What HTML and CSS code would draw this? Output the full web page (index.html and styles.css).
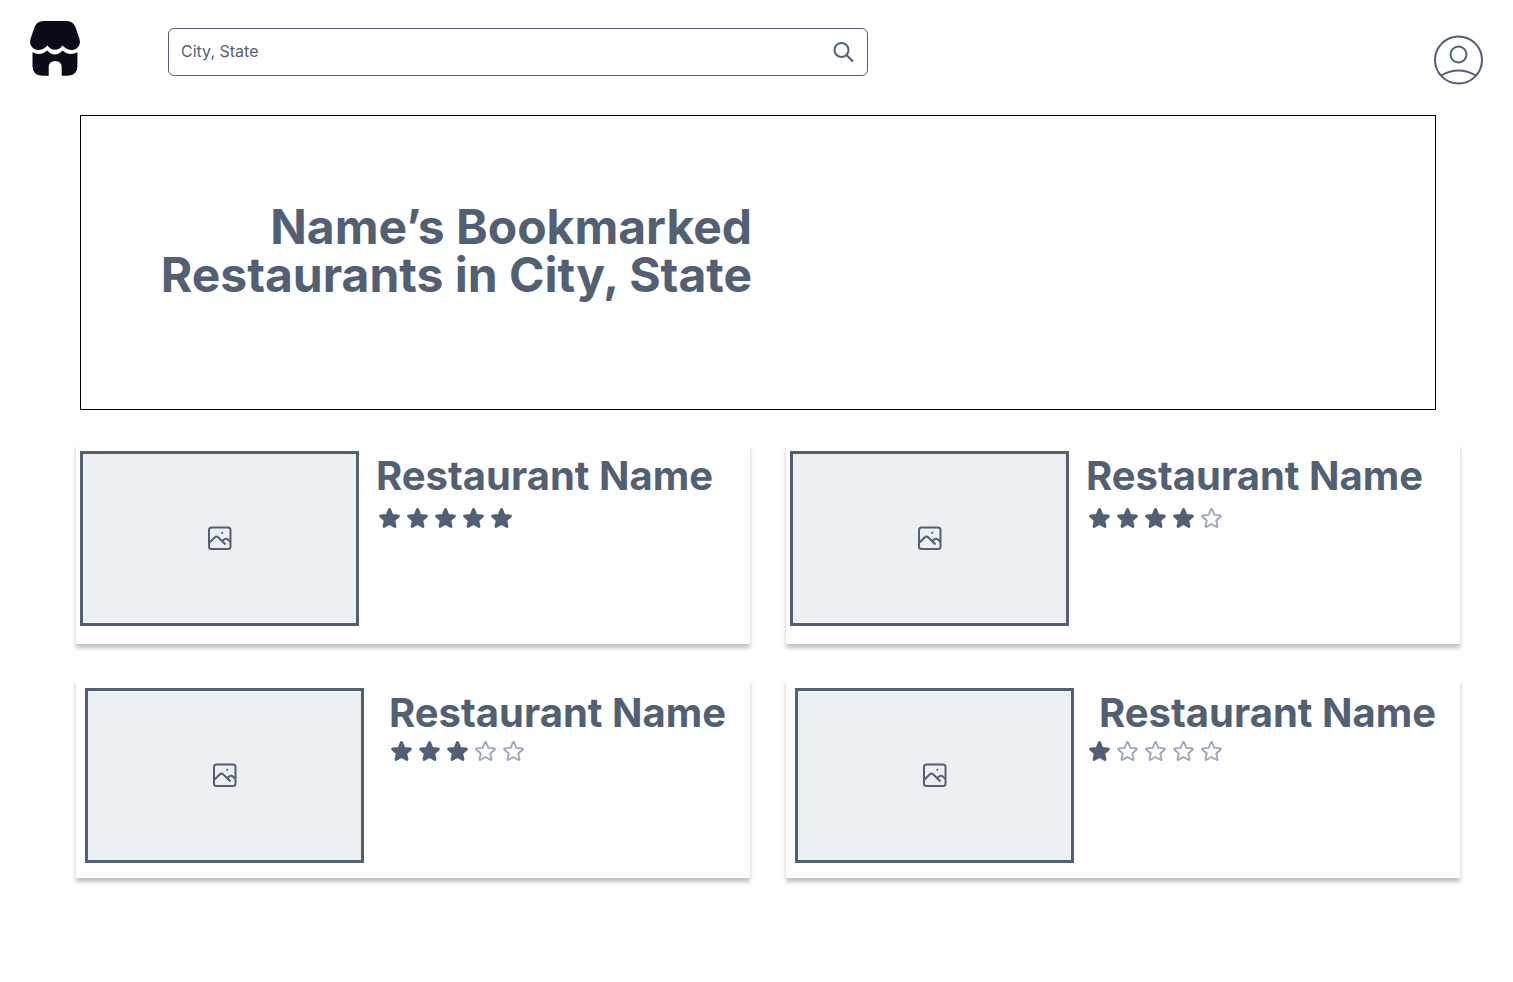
FILE: index.html
```html
<!DOCTYPE html>
<html lang="en">
<head>
<meta charset="utf-8">
<meta name="viewport" content="width=device-width, initial-scale=1">
<title>Bookmarked Restaurants</title>
<link rel="stylesheet" href="styles.css">
</head>
<body>
<svg class="sprite" aria-hidden="true">
  <symbol id="star" viewBox="0 0 24 24">
    <path d="M11.800 3.500q.7-1.200 1.400 0l2.100 5.300 5.700.5q1.700.3.5 1.500l-4.300 3.700 1.300 5.500q.1 1.400-1.200.8L12.500 18l-4.800 2.800q-1.300.6-1.200-.8l1.300-5.500-4.300-3.700q-1.200-1.200.5-1.500l5.700-.5z" stroke-width="1.800" stroke-linejoin="round"/>
  </symbol>
  <symbol id="picture" viewBox="0 0 24 24">
    <g fill="none" stroke="currentColor" stroke-width="2">
      <rect x="1" y="0.500" width="21.500" height="21.500" rx="2.500"/>
      <path d="M1.500 15.500l5.400-5.200q1.600-1.500 3.200 0l7.400 7.200M14 14.300l2.100-1.800q2-1.500 3.800 0l2.400 2.200"/>
    </g>
    <circle cx="14.200" cy="5.800" r="1.100" fill="currentColor"/>
  </symbol>
</svg>
<header class="topbar">
  <a class="logo" href="#" aria-label="Home">
    <svg viewBox="0 0 50 55" fill="#0b0b17">
      <path d="M13.500 0h23q6.500 0 9 6l3.800 11.500q2 6.500-2.700 10-6.600 4.300-14.100-3-3.300 4.300-7.500 4.300t-7.500-4.300q-7.500 7.300-14.100 3-4.700-3.500-2.700-10L4.500 6Q7 0 13.500 0z"/>
      <path d="M2.500 31.300q8 4.200 14.600-1.800 7.700 8 15.500 0 6.700 6 14.800 1.800V45q0 9.700-9.700 9.700h-6V46.500q0-6.500-6.500-6.500t-6.500 6.500v8.200h-6.500q-9.700 0-9.700-9.700z"/>
    </svg>
  </a>
  <form class="search" role="search">
    <input type="text" placeholder="City, State" aria-label="City, State">
    <button type="submit" aria-label="Search">
      <svg viewBox="0 0 22 22" fill="none" stroke="currentColor" stroke-width="2"><circle cx="8.500" cy="9" r="7"/><path d="M13.500 14l6.500 6.500" stroke-width="2.200"/></svg>
    </button>
  </form>
  <button class="profile" type="button" aria-label="Profile">
    <svg viewBox="0 0 50 50" fill="none" stroke="currentColor" stroke-width="2"><circle cx="25.500" cy="25" r="23.500"/><circle cx="25.500" cy="19.500" r="8"/><path d="M8 40.500q17.500-10 35 0"/></svg>
  </button>
</header>
<main class="content">
  <section class="hero">
    <h1>Name’s Bookmarked Restaurants in City, State</h1>
  </section>
  <section class="grid" aria-label="Bookmarked restaurants">
    <article class="card">
      <div class="photo"><svg><use href="#picture"/></svg></div>
      <div class="info">
        <h2>Restaurant Name</h2>
        <div class="stars" role="img" aria-label="5 out of 5 stars"><svg class="on"><use href="#star"/></svg><svg class="on"><use href="#star"/></svg><svg class="on"><use href="#star"/></svg><svg class="on"><use href="#star"/></svg><svg class="on"><use href="#star"/></svg></div>
      </div>
    </article>
    <article class="card">
      <div class="photo"><svg><use href="#picture"/></svg></div>
      <div class="info">
        <h2>Restaurant Name</h2>
        <div class="stars" role="img" aria-label="4 out of 5 stars"><svg class="on"><use href="#star"/></svg><svg class="on"><use href="#star"/></svg><svg class="on"><use href="#star"/></svg><svg class="on"><use href="#star"/></svg><svg><use href="#star"/></svg></div>
      </div>
    </article>
    <article class="card card-inset">
      <div class="photo"><svg><use href="#picture"/></svg></div>
      <div class="info">
        <h2>Restaurant Name</h2>
        <div class="stars" role="img" aria-label="3 out of 5 stars"><svg class="on"><use href="#star"/></svg><svg class="on"><use href="#star"/></svg><svg class="on"><use href="#star"/></svg><svg><use href="#star"/></svg><svg><use href="#star"/></svg></div>
      </div>
    </article>
    <article class="card card-inset card-outdent">
      <div class="photo"><svg><use href="#picture"/></svg></div>
      <div class="info">
        <h2>Restaurant Name</h2>
        <div class="stars" role="img" aria-label="1 out of 5 stars"><svg class="on"><use href="#star"/></svg><svg><use href="#star"/></svg><svg><use href="#star"/></svg><svg><use href="#star"/></svg><svg><use href="#star"/></svg></div>
      </div>
    </article>
  </section>
</main>
</body>
</html>
```
FILE: styles.css
```css
* { box-sizing: border-box; }
body {
  margin: 0;
  background: #fff;
  color: #535f73;
  font-family: Inter, "Liberation Sans", sans-serif;
}
h1, h2 { margin: 0; font-weight: 700; }
svg { display: block; }
button { padding: 0; border: 0; background: none; color: inherit; cursor: pointer; }
.sprite { position: absolute; width: 0; height: 0; }

.topbar {
  display: flex;
  align-items: flex-start;
  padding: 21px 30px 0;
}
.logo svg { width: 50px; height: 55px; }
.search {
  display: flex;
  align-items: center;
  flex: 0 1 700px;
  height: 48px;
  margin: 7px 0 0 88px;
  padding: 0 12px;
  border: 1px solid #535f73;
  border-radius: 6px;
}
.search input {
  flex: 1;
  min-width: 0;
  padding: 0 0 2px;
  border: 0;
  outline: 0;
  background: none;
  color: inherit;
  font: 400 16px/24px Inter, "Liberation Sans", sans-serif;
}
.search input::placeholder { color: #535f73; opacity: 1; }
.search svg { width: 22px; height: 22px; }
.profile { margin: 14px 0 0 auto; }
.profile svg { width: 50px; height: 50px; }

.content { padding: 30px 53px 40px 76px; }
.hero {
  min-height: 295px;
  margin: 0 24px 0 4px;
  padding: 87px 0;
  border: 1px solid #000;
}
.hero h1 {
  width: 50%;
  padding-right: 6px;
  font-size: 48px;
  line-height: 48px;
  text-align: right;
}
.grid {
  display: grid;
  grid-template-columns: 1fr 1fr;
  gap: 34px 36px;
  margin-top: 34px;
}
.card {
  display: flex;
  align-items: flex-start;
  gap: 17px;
  min-height: 200px;
  padding: 7px 4px;
  background: #fff;
  box-shadow: 0 4px 4px rgba(0, 0, 0, 0.25);
}
.photo {
  display: grid;
  place-items: center;
  flex: 0 0 279px;
  height: 175px;
  border: 3px solid #535f73;
  background: #ecf0f3;
}
.photo svg { width: 24px; height: 24px; overflow: visible; }
#picture { overflow: visible; }
.info { padding-top: 5px; white-space: nowrap; }
.info h2 { font-size: 40px; line-height: 40px; }
.stars { display: flex; gap: 4px; margin: 10px 0 0 1px; }
.stars svg { width: 24px; height: 24px; fill: none; stroke: #9ca6b9; }
.stars .on { fill: #535f73; stroke: #535f73; }

.card-inset { gap: 25px; padding: 10px 9px; }
.card-inset .stars { margin: 6px 0 0; }
.card-outdent .stars { margin-left: -12px; }
```
